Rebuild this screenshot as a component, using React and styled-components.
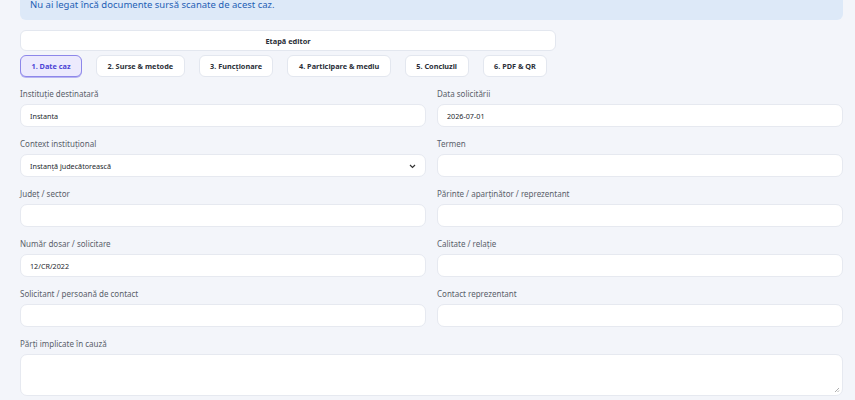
import React from 'react';
import styled, { createGlobalStyle } from 'styled-components';

const GlobalStyle = createGlobalStyle`
  html, body {
    margin: 0;
    padding: 0;
    background: #f3f5fa;
    font-family: "Source Sans Pro", "Noto Sans", "Open Sans", sans-serif;
    overflow: hidden;
  }
  * { box-sizing: border-box; }
`;

const Page = styled.div`
  margin-top: -11px;
  padding: 0 12px 0 20px;
  display: flex;
  flex-direction: column;
`;

const Notice = styled.div`
  background: #dde9f8;
  border-radius: 6px;
  padding: 8px 10px 7px;
  font-size: 9.5px;
  line-height: 16px;
  color: #1f5fb5;
`;

const StageBox = styled.div`
  margin-top: 10px;
  width: 536px;
  height: 21px;
  background: #fff;
  border: 1px solid #e3e7ef;
  border-radius: 6px;
  display: flex;
  align-items: center;
  justify-content: center;
  font-size: 7.4px;
  font-weight: 700;
  color: #2b2f38;
`;

const Tabs = styled.div`
  margin-top: 4px;
  display: flex;
  gap: 14px;
`;

const Tab = styled.button`
  height: 22px;
  padding: 0 10.5px;
  border-radius: 6px;
  font-family: inherit;
  font-size: 7.3px;
  font-weight: 700;
  border: 1px solid ${p => (p.$active ? '#8d87ea' : '#e3e7ef')};
  background: ${p => (p.$active ? '#eceafd' : '#fff')};
  color: ${p => (p.$active ? '#4d45d6' : '#2b2f38')};
  box-shadow: ${p => (p.$active ? '0 1px 0 #b9b4f2' : 'none')};
  cursor: pointer;
`;

const Form = styled.div`
  margin-top: 11px;
  display: grid;
  grid-template-columns: 406px 406px;
  column-gap: 11px;
  row-gap: 11px;
`;

const Field = styled.div`
  display: flex;
  flex-direction: column;
  gap: 4px;
  grid-column: ${p => (p.$wide ? '1 / -1' : 'auto')};
`;

const Label = styled.label`
  font-size: 8px;
  line-height: 12px;
  color: #5a5f6a;
`;

const Input = styled.div`
  position: relative;
  height: 23px;
  background: #fff;
  border: 1px solid #e6e9f0;
  border-radius: 7px;
  display: flex;
  align-items: center;
  padding: 0 9px;
  font-size: 7.2px;
  color: #23262d;
`;

const Area = styled(Input)`
  height: 42px;
  align-items: flex-start;
`;

const Chevron = styled.svg`
  position: absolute;
  right: 9px;
  top: 9px;
`;

const Grip = styled.svg`
  position: absolute;
  right: 2px;
  bottom: 2px;
`;

const tabs = [
  '1. Date caz',
  '2. Surse & metode',
  '3. Funcționare',
  '4. Participare & mediu',
  '5. Concluzii',
  '6. PDF & QR',
];

const fields = [
  ['Instituție destinatară', 'Instanta'],
  ['Data solicitării', '2026-07-01'],
  ['Context instituțional', 'Instanță judecătorească', true],
  ['Termen', ''],
  ['Județ / sector', ''],
  ['Părinte / aparținător / reprezentant', ''],
  ['Număr dosar / solicitare', '12/CR/2022'],
  ['Calitate / relație', ''],
  ['Solicitant / persoană de contact', ''],
  ['Contact reprezentant', ''],
];

export default function App() {
  return (
    <>
      <GlobalStyle />
      <Page>
        <Notice>Nu ai legat încă documente sursă scanate de acest caz.</Notice>
        <StageBox>Etapă editor</StageBox>
        <Tabs>
          {tabs.map((t, i) => (
            <Tab key={t} $active={i === 0}>{t}</Tab>
          ))}
        </Tabs>
        <Form>
          {fields.map(([label, value, select]) => (
            <Field key={label}>
              <Label>{label}</Label>
              <Input>
                {value}
                {select && (
                  <Chevron width="7" height="5" viewBox="0 0 7 5">
                    <path d="M1 1l2.5 2.5L6 1" fill="none" stroke="#333" strokeWidth="1.2" />
                  </Chevron>
                )}
              </Input>
            </Field>
          ))}
          <Field $wide>
            <Label>Părți implicate în cauză</Label>
            <Area>
              <Grip width="6" height="6" viewBox="0 0 6 6">
                <path d="M5 1L1 5M5 3.5L3.5 5" stroke="#999" strokeWidth="0.8" />
              </Grip>
            </Area>
          </Field>
        </Form>
      </Page>
    </>
  );
}
